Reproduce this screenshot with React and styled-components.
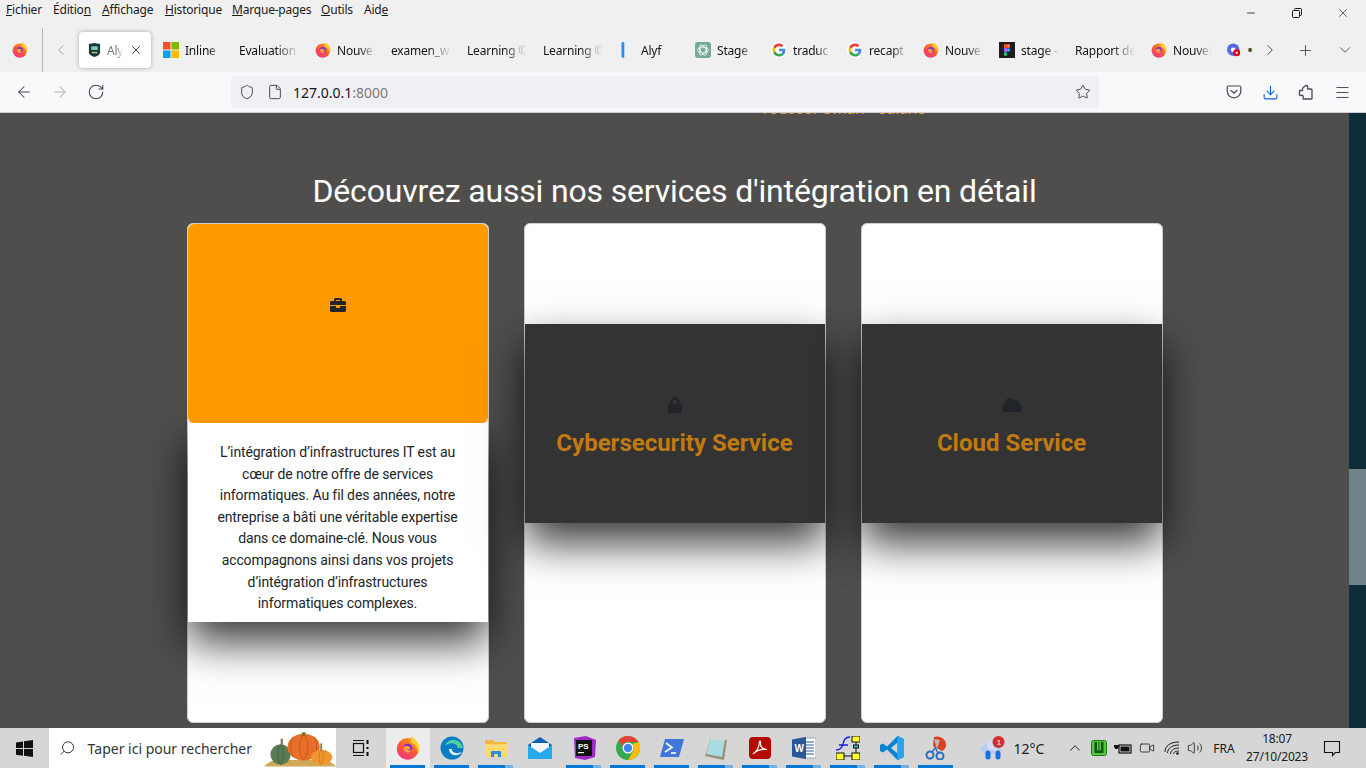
import React from 'react'
import styled, { createGlobalStyle } from 'styled-components'
import {
  ArrowLeft, ArrowRight, RotateCw, Shield, File, Star, Download, Menu,
  ChevronLeft, ChevronRight, ChevronDown, ChevronUp, Plus, X, Minus, Search, Volume2, Video,
} from 'lucide-react'
import { FaBriefcase, FaLock, FaCloud } from 'react-icons/fa'

const uiFont = '"Noto Sans", "Open Sans", sans-serif'
const pageFont = 'Roboto, "Noto Sans", sans-serif'

const GlobalStyle = createGlobalStyle`
  html, body { margin: 0; padding: 0; background: #4f4e4c; }
  body { font-family: ${uiFont}; overflow: hidden; }
  * { box-sizing: border-box; }
`

const Screen = styled.div`
  width: 1366px;
  height: 768px;
  display: flex;
  flex-direction: column;
  overflow: hidden;
`

/* browser chrome */
const TitleRow = styled.div`
  height: 28px;
  background: #f0f0f0;
  display: flex;
  justify-content: space-between;
`
const MenuBar = styled.div`
  display: flex;
  padding: 1px 0 0 6px;
  height: 20px;
`
const MenuItem = styled.span`
  width: ${p => p.$w}px;
  font-size: 12px;
  line-height: 18px;
  color: #1a1a1a;
  white-space: nowrap;
  letter-spacing: -0.2px;
`
const WinButtons = styled.div`
  display: flex;
  color: #111;
  padding-top: 5px;
`
const WinButton = styled.div`
  width: 46px;
  height: 16px;
  display: flex;
  align-items: center;
  justify-content: center;
`
const TabRow = styled.div`
  height: 44px;
  background: #f0f0f0;
  display: flex;
  align-items: center;
`
const AppSlot = styled.div`
  width: 43px;
  height: 44px;
  border-right: 1px solid #b8b8b8;
  display: flex;
  align-items: center;
  justify-content: center;
  padding-right: 3px;
  margin-right: 36px;
  position: relative;
`
const ScrollLeft = styled.div`
  position: absolute;
  left: 52px;
  top: 13px;
  color: #b4b4b8;
  display: flex;
`
const ActiveTab = styled.div`
  width: 72px;
  height: 36px;
  margin-right: 4px;
  background: #fff;
  border-radius: 4px;
  box-shadow: 0 0 4px rgba(0, 0, 0, 0.3);
  display: flex;
  align-items: center;
  padding-left: 9px;
  gap: 6px;
  font-size: 12px;
  color: #15141a;
`
const Tab = styled.div`
  width: 76px;
  height: 36px;
  flex: none;
  display: flex;
  align-items: center;
  gap: 6px;
  padding: 0 8px;
  font-size: 12px;
  color: #15141a;
  white-space: nowrap;
  overflow: hidden;
`
const TabTitle = styled.span`
  flex: 1;
  min-width: 0;
  overflow: hidden;
  letter-spacing: -0.2px;
  mask-image: linear-gradient(to right, #000 62%, transparent 100%);
`
const ActiveTitle = styled(TabTitle)`
  flex: none;
  width: 16px;
  color: #777;
`
const TabControl = styled.div`
  width: ${p => p.$w}px;
  height: 44px;
  flex: none;
  display: flex;
  align-items: center;
  justify-content: ${p => (p.$edge ? 'flex-start' : 'center')};
  padding-left: ${p => (p.$edge ? '8px' : '0')};
  gap: 6px;
  color: #4a4a4f;
`
const Toolbar = styled.div`
  height: 41px;
  background: #f9f9fb;
  border-bottom: 1px solid #cfcfd3;
  display: flex;
  align-items: center;
`
const ToolIcon = styled.div`
  width: 36px;
  display: flex;
  justify-content: center;
  color: ${p => p.$color || '#4a4a4f'};
`
const NavGroup = styled.div`
  display: flex;
  padding-left: 6px;
  width: 231px;
`
const UrlBar = styled.div`
  width: 868px;
  height: 32px;
  background: #f0f0f4;
  border-radius: 4px;
  display: flex;
  align-items: center;
  padding-left: 8px;
  color: #4a4a4f;
  gap: 12px;
`
const UrlText = styled.span`
  font-size: 14px;
  color: #15141a;
  flex: 1;
  margin-left: -2px;
`
const UrlPort = styled.span`
  color: #7a7a80;
`
const StarSlot = styled.div`
  display: flex;
  padding-right: 8px;
`
const RightTools = styled.div`
  display: flex;
  padding-left: 117px;
`

/* page */
const Viewport = styled.div`
  height: 615px;
  display: flex;
`
const Page = styled.main`
  flex: 1;
  background: #4f4e4c;
  overflow: hidden;
  font-family: ${pageFont};
`
const ClippedCaption = styled.div`
  height: 2px;
  overflow: hidden;
  display: flex;
  align-items: flex-end;
  padding-left: 760px;
  color: #f09a35;
  font-size: 16px;
  line-height: 12px;
  white-space: nowrap;
`
const Heading = styled.h2`
  margin: 52px 0 8px;
  font-size: 32px;
  line-height: 48px;
  font-weight: 400;
  letter-spacing: -0.17px;
  color: #fff;
  text-align: center;
`
const Cards = styled.div`
  display: flex;
  justify-content: center;
  gap: 35px;
`
const Card = styled.article`
  width: 302px;
  height: 500px;
  flex: none;
  background: #fff;
  border: 1px solid #cfcfcf;
  border-radius: 6px;
`
const Face = styled.div`
  position: relative;
  height: 199px;
  margin-top: ${p => p.$offset || 0}px;
  padding-top: 73px;
  display: flex;
  flex-direction: column;
  align-items: center;
  color: #212529;
  background: ${p => p.$bg};
  border-radius: ${p => (p.$round ? '6px' : '0')};
  box-shadow: ${p => (p.$shadow ? '0 20px 40px rgba(0, 0, 0, 0.78)' : 'none')};
`
const FaceIcon = styled.div`
  height: 16px;
  display: flex;
  align-items: center;
  font-size: ${p => p.$size || 16}px;
`
const CardTitle = styled.h3`
  margin: 12px 0 0;
  font-size: 24px;
  line-height: 36px;
  font-weight: 700;
  color: #c07a10;
  white-space: nowrap;
`
const CardText = styled.div`
  height: 199px;
  padding-top: 19px;
  font-size: 14px;
  line-height: 21.6px;
  letter-spacing: -0.1px;
  color: #212529;
  text-align: center;
  white-space: nowrap;
  background: #fff;
  box-shadow: 0 20px 40px rgba(0, 0, 0, 0.78);
`
const Scrollbar = styled.div`
  width: 17px;
  background: #0f2d38;
  padding-top: 356px;
`
const Thumb = styled.div`
  height: 116px;
  background: #6e8287;
`

/* windows taskbar */
const Taskbar = styled.footer`
  height: 40px;
  background: #d6d6d6;
  display: flex;
  align-items: center;
`
const StartSlot = styled.div`
  width: 49px;
  display: flex;
  justify-content: center;
`
const SearchBox = styled.div`
  width: 287px;
  height: 40px;
  background: #fff;
  display: flex;
  align-items: center;
  padding-left: 10px;
  gap: 12px;
  font-size: 14px;
  color: #333;
  overflow: hidden;
`
const SearchLabel = styled.span`
  flex: 1;
  white-space: nowrap;
`
const TaskCell = styled.div`
  width: ${p => p.$w || 44}px;
  height: 40px;
  flex: none;
  position: relative;
  display: flex;
  align-items: center;
  justify-content: center;
  background: ${p => (p.$active ? '#ececec' : 'transparent')};
  &::after {
    content: '';
    display: ${p => (p.$run ? 'block' : 'none')};
    position: absolute;
    left: 4px;
    right: 5px;
    bottom: 0;
    height: 3px;
    background: ${p =>
      p.$run === 'split'
        ? 'linear-gradient(to right, #0078d4 77%, #6fb1e4 77%)'
        : '#0078d4'};
  }
`
const TraySlot = styled.div`
  width: ${p => p.$w}px;
  margin-left: ${p => p.$ml || 0}px;
  flex: none;
  display: flex;
  align-items: center;
  justify-content: center;
  color: #1a1a1a;
  font-size: ${p => p.$fs || 12}px;
  white-space: nowrap;
`
const Clock = styled.div`
  width: 68px;
  flex: none;
  font-size: 12px;
  line-height: 18px;
  text-align: center;
  color: #1a1a1a;
  letter-spacing: -0.2px;
`

/* favicons and logos */
const FirefoxIcon = ({ size = 16 }) => (
  <svg width={size} height={size} viewBox="0 0 16 16">
    <defs>
      <linearGradient id="ffBody" x1="0.8" y1="0" x2="0.2" y2="1">
        <stop offset="0" stopColor="#ffa020" />
        <stop offset="0.5" stopColor="#ff5a30" />
        <stop offset="1" stopColor="#f0308a" />
      </linearGradient>
    </defs>
    <circle cx="7.8" cy="8.6" r="7.2" fill="url(#ffBody)" />
    <path d="M9.5.3c3.300 1.200 6 4 6 7.700 0 1.300-.3 2.500-.8 3.500-.3-3.800-2.200-6.300-5.400-7.300.9-1.200 1-2.700.2-3.900z" fill="#ffcf30" />
    <circle cx="7.800" cy="8.200" r="3.100" fill="#7a30c8" />
    <path d="M5 7.200c1.500-.9 4-.6 4.600.8.300 1-1.300 1.400-2.200 1 1.100 1.100 2.900.6 3.300-.7-.1 1.900-1.700 3.100-3.400 2.800-1.900-.3-2.800-2.300-2.300-3.900z" fill="#ff9a3a" />
  </svg>
)
const MicrosoftIcon = () => (
  <svg width="16" height="16" viewBox="0 0 16 16">
    <rect width="7.500" height="7.500" fill="#f25022" />
    <rect x="8.500" width="7.500" height="7.500" fill="#7fba00" />
    <rect y="8.500" width="7.500" height="7.500" fill="#00a4ef" />
    <rect x="8.500" y="8.500" width="7.500" height="7.500" fill="#ffb900" />
  </svg>
)
const GoogleIcon = () => (
  <svg width="16" height="16" viewBox="0 0 48 48">
    <circle cx="24" cy="24" r="24" fill="#fff" />
    <path fill="#EA4335" d="M24 12.500c3 0 5.600 1 7.700 3l5.700-5.700C33.900 6.500 29.400 4.500 24 4.500 16.400 4.500 9.800 8.900 6.600 15.200l6.700 5.200c1.600-4.700 6-7.900 10.700-7.900z" />
    <path fill="#4285F4" d="M43 24.500c0-1.400-.1-2.700-.4-4H24v7.600h10.700c-.5 2.500-1.900 4.600-4 6l6.500 5c3.700-3.500 5.800-8.600 5.800-14.600z" />
    <path fill="#FBBC05" d="M13.300 28.600c-.4-1.200-.7-2.400-.7-3.600 0-1.300.2-3.400.7-4.600l-6.700-5.200C5.200 18 4.500 21 4.500 24s.7 6 2.100 8.800l6.700-4.200z" />
    <path fill="#34A853" d="M24 43.500c5.300 0 9.700-1.700 12.900-4.800l-6.300-4.900c-1.700 1.200-3.900 1.900-6.600 1.900-4.900 0-9-3.200-10.500-7.700l-6.700 5.100C9.900 39.100 16.400 43.500 24 43.500z" />
  </svg>
)
const GptIcon = () => (
  <svg width="16" height="16" viewBox="0 0 16 16">
    <rect width="16" height="16" rx="3" fill="#74aa9c" />
    <g fill="none" stroke="#fff" strokeWidth="0.8">
      <ellipse cx="8" cy="8" rx="5.500" ry="2.800" />
      <ellipse cx="8" cy="8" rx="5.500" ry="2.800" transform="rotate(60 8 8)" />
      <ellipse cx="8" cy="8" rx="5.500" ry="2.800" transform="rotate(120 8 8)" />
    </g>
  </svg>
)
const FigmaIcon = () => (
  <svg width="16" height="16" viewBox="0 0 16 16">
    <rect width="16" height="16" fill="#1e1e1e" />
    <rect x="5" y="2" width="3" height="4" fill="#f24e1e" />
    <rect x="8" y="2" width="3" height="4" rx="1.500" fill="#ff7262" />
    <rect x="5" y="6" width="3" height="4" fill="#a259ff" />
    <circle cx="9.500" cy="8" r="1.700" fill="#1abcfe" />
    <rect x="5" y="10" width="3" height="4" rx="1.500" fill="#0acf83" />
  </svg>
)
const AlyfIcon = () => (
  <svg width="16" height="16" viewBox="0 0 16 16">
    <rect x="2.500" y="0" width="2.800" height="16" rx="1.400" fill="#2a8cf0" />
  </svg>
)
const AlyfBadge = () => (
  <svg width="13" height="16" viewBox="0 0 14 16">
    <path d="M1 1.500 7 .5l6 1v9.500c0 2-3 3.500-6 4.500-3-1-6-2.500-6-4.500z" fill="#173a3c" />
    <rect x="3.500" y="4" width="7" height="4" fill="#7ec4b8" />
    <rect x="4" y="10" width="6" height="1.500" fill="#d8c060" />
  </svg>
)
const DiscordDot = () => (
  <svg width="17" height="17" viewBox="0 0 18 18">
    <circle cx="8" cy="8" r="8" fill="#5468e8" />
    <circle cx="8" cy="8" r="3" fill="#fff" />
    <circle cx="12.500" cy="12" r="4.500" fill="#e00010" />
    <circle cx="12.500" cy="12" r="1.500" fill="#fff" />
  </svg>
)
const PocketIcon = () => (
  <svg width="16" height="16" viewBox="0 0 16 16" fill="none" stroke="#4a4a4f" strokeWidth="1.200">
    <path d="M2.500 2h11c.8 0 1.300.5 1.300 1.300V7c0 3.800-3 6.800-6.800 6.800S1.200 10.800 1.200 7V3.300C1.200 2.500 1.700 2 2.500 2z" />
    <path d="M5 6.500 8 9.300l3-2.800" strokeLinecap="round" />
  </svg>
)
const PuzzleIcon = () => (
  <svg width="16" height="16" viewBox="0 0 16 16" fill="none" stroke="#4a4a4f" strokeWidth="1.300" strokeLinejoin="round">
    <path d="M1.500 6.500h3V5.300C4.500 4.300 5 3.500 5.800 3c1-.6 1.700-1.500 2.600-1.500 1 0 1.600 1 1.300 2-.2.500-.2 1 .1 1.500h3.200c.6 0 1 .4 1 1v8.500c0 .3-.2.500-.5.500H5.200v-2.500c0-1-1-1.500-1.800-1.100-.8.400-1.900-.2-1.900-1.100z" />
  </svg>
)
const RestoreIcon = () => (
  <svg width="10" height="10" viewBox="0 0 10 10" fill="none" stroke="#111" strokeWidth="1">
    <rect x="0.500" y="2.500" width="7" height="7" rx="1" />
    <path d="M2.500 2.500V1.500a1 1 0 0 1 1-1h5a1 1 0 0 1 1 1v5a1 1 0 0 1-1 1h-1" />
  </svg>
)
const WindowsLogo = () => (
  <svg width="17" height="17" viewBox="0 0 17 17" fill="#111">
    <path d="M0 2.400 7 1.400v6.700H0zM8 1.300 17 0v8.100H8zM0 9h7v6.700l-7-1zM8 9h9v8l-9-1.300z" />
  </svg>
)
const Pumpkins = () => (
  <svg width="78" height="40" viewBox="0 0 78 40">
    <path d="M0 40c3-3 7-6 12-7h54c5 1 9 4 12 7z" fill="#d0a858" />
    <ellipse cx="18" cy="27" rx="11" ry="11" fill="#5a7a55" />
    <path d="M18 16c-4 5-4 17 0 22M18 16c4 5 4 17 0 22" stroke="#44613f" fill="none" />
    <rect x="18" y="10" width="2.500" height="7" fill="#8a7a58" />
    <ellipse cx="43" cy="19" rx="17.500" ry="14.500" fill="#e8702a" />
    <path d="M43 5c-6 6-6 22 0 28M43 5c6 6 6 22 0 28M32 8c-4 6-4 16 0 22M54 8c4 6 4 16 0 22" stroke="#c9551a" fill="none" />
    <rect x="41" y="3" width="4" height="4" fill="#70762f" />
    <ellipse cx="62.500" cy="30" rx="11.500" ry="8" fill="#f0962e" />
    <path d="M62 22c-3 4-3 12 0 16M62 22c3 4 3 12 0 16" stroke="#d0781c" fill="none" />
    <rect x="61" y="15" width="2" height="8" fill="#9a7a48" />
  </svg>
)
const TaskView = () => (
  <svg width="18" height="18" viewBox="0 0 18 18" fill="none" stroke="#111" strokeWidth="1.200">
    <path d="M1 1.500h11M1 16.500h11" />
    <rect x="1.500" y="4.500" width="10" height="9" />
    <path d="M15.500 1v4M15.500 8v2M15.500 13v4" strokeWidth="2" />
  </svg>
)
const EdgeIcon = () => (
  <svg width="24" height="24" viewBox="0 0 24 24">
    <circle cx="12" cy="12" r="11.500" fill="#0c7cc4" />
    <path d="M23 13c-.5-6-5-9-10-9-4 0-7 2.500-8 6 2-2 5-3 8-2.500 3 .5 5 2.500 4.500 4.500H23z" fill="#4fd2a0" />
    <path d="M9 13c0 4 4 7 8 6 2.500-.5 4-1.500 5-3-2 1-4.500 1.500-6 1-3-.5-4.500-2-4-4z" fill="#fff" opacity="0.9" />
  </svg>
)
const FilesIcon = () => (
  <svg width="22" height="20" viewBox="0 0 22 20">
    <path d="M0 2h8l2 2h12v15H0z" fill="#f0b840" />
    <rect y="6" width="22" height="13" fill="#ffd870" />
    <path d="M6 19v-5a1 1 0 0 1 1-1h8a1 1 0 0 1 1 1v5h-3v-3H9v3z" fill="#2a8ee0" />
  </svg>
)
const MailIcon = () => (
  <svg width="24" height="22" viewBox="0 0 24 22">
    <path d="M12 0 24 8v14H0V8z" fill="#0a64b4" />
    <path d="M3 6h18v9l-9 4-9-4z" fill="#fff" opacity="0.95" />
    <path d="M0 8l12 8 12-8v14H0z" fill="#28a8ea" />
  </svg>
)
const PsIcon = () => (
  <svg width="24" height="24" viewBox="0 0 24 24">
    <path d="M2 2 14 0l10 4-1 17-10 3-10-2z" fill="#a028c8" />
    <rect x="4" y="4" width="16" height="16" fill="#111" />
    <text x="6" y="13" fontSize="8" fontWeight="700" fontFamily="Liberation Sans, sans-serif" fill="#fff">PS</text>
    <rect x="6" y="16" width="6" height="1.200" fill="#fff" />
  </svg>
)
const ChromeIcon = () => (
  <svg width="24" height="24" viewBox="0 0 24 24">
    <circle cx="12" cy="12" r="12" fill="#34a853" />
    <path d="M12 0a12 12 0 0 1 10.400 6H12a6 6 0 0 0-5.600 3.800L2.400 4.500A12 12 0 0 1 12 0z" fill="#ea4335" />
    <path d="M22.400 6A12 12 0 0 1 12 24l5.200-9A6 6 0 0 0 16 8z" fill="#fbbc05" />
    <circle cx="12" cy="12" r="5.500" fill="#fff" />
    <circle cx="12" cy="12" r="4.200" fill="#4285f4" />
  </svg>
)
const PowerShellIcon = () => (
  <svg width="24" height="20" viewBox="0 0 24 20">
    <path d="M5 1h19l-5 18H0z" fill="#3f78d8" />
    <path d="M6 5l6 4.500L5 14" fill="none" stroke="#fff" strokeWidth="1.600" />
    <path d="M11 15h5" stroke="#fff" strokeWidth="1.600" />
  </svg>
)
const NotepadIcon = () => (
  <svg width="24" height="24" viewBox="0 0 24 24">
    <path d="M7 1 23 4l-3 20L1 20z" fill="#9a8f78" />
    <path d="M7 1 21 3l-3 18L2 18z" fill="#a8dce0" />
    <path d="M7 1 21 3l-.5 2L6 3z" fill="#d8d8d0" />
  </svg>
)
const AcrobatIcon = () => (
  <svg width="22" height="22" viewBox="0 0 22 22">
    <rect width="22" height="22" rx="4" fill="#b30b00" />
    <path d="M4 17c3-2 6-7 6.500-12 .2-1.500 1.200-1 1 .5-.5 4 2 7 6.500 7-4-.5-9 0-12 3" fill="none" stroke="#fff" strokeWidth="1.200" />
  </svg>
)
const WordIcon = () => (
  <svg width="24" height="22" viewBox="0 0 24 22">
    <rect x="9" y="1" width="15" height="20" fill="#fff" stroke="#9aa8c0" />
    <path d="M11 5h11M11 8h11M11 11h11M11 14h11M11 17h11" stroke="#2a5699" />
    <path d="M0 2.500 14 0v22L0 19.500z" fill="#2a5699" />
    <text x="2.500" y="15" fontSize="10" fontWeight="700" fontFamily="Liberation Sans, sans-serif" fill="#fff">W</text>
  </svg>
)
const YedIcon = () => (
  <svg width="24" height="24" viewBox="0 0 24 24">
    <rect x="16" y="0" width="8" height="6" fill="#ffff30" stroke="#111" />
    <rect x="0" y="17" width="8" height="7" fill="#ffff30" stroke="#111" />
    <rect x="16" y="17" width="8" height="7" fill="#ffff30" stroke="#111" />
    <path d="M20 6v11M8 20h8" stroke="#111" />
    <path d="M0 14c4 0 6-2 7-6s2-7 7-7M3 9h9" fill="none" stroke="#1a1af0" strokeWidth="1.300" />
    <rect x="17.500" y="9" width="5" height="3" fill="#2ac0c0" stroke="#111" />
  </svg>
)
const VsCodeIcon = () => (
  <svg width="24" height="24" viewBox="0 0 24 24">
    <path d="M17.500 0 24 3v18l-6.500 3L7 13.500 3 16.500 0 15v-6l3-1.500 4 3z" fill="#0a84d0" />
    <path d="M17.500 6.500 11 12l6.500 5.500z" fill="#d6d6d6" />
    <path d="M17.500 0 24 3v18l-6.500 3z" fill="#28a4ec" />
  </svg>
)
const SnipIcon = () => (
  <svg width="22" height="24" viewBox="0 0 22 24">
    <path d="M9 1c6-2 12 2 12 8 0 3-2 5-4 6L8 10z" fill="#d84020" />
    <path d="M9 3 15 4l-3 9z" fill="#b8b8b8" />
    <circle cx="5" cy="19" r="3.500" fill="none" stroke="#2a70c0" strokeWidth="2" />
    <circle cx="15" cy="20" r="3.500" fill="none" stroke="#2a70c0" strokeWidth="2" />
    <path d="M7 16 11 11M13 17 10 11" stroke="#2a70c0" strokeWidth="1.500" />
  </svg>
)
const WeatherIcon = () => (
  <svg width="24" height="24" viewBox="0 0 24 24">
    <ellipse cx="10" cy="13" rx="10" ry="5.500" fill="#b8cdf0" />
    <circle cx="12" cy="9" r="6" fill="#d0ddf5" />
    <path d="M7 17v4M17 17v4" stroke="#1a70e0" strokeWidth="5" strokeLinecap="round" />
    <circle cx="17.500" cy="6" r="6" fill="#d03030" />
    <text x="15.700" y="9" fontSize="8" fontFamily="Liberation Sans, sans-serif" fill="#fff">1</text>
  </svg>
)
const GreenApp = () => (
  <svg width="16" height="16" viewBox="0 0 16 16">
    <rect x="0.500" y="0.500" width="15" height="15" rx="2" fill="#5cc040" stroke="#108010" />
    <path d="M3.500 2v11h9V2h-2.500v8.500h-1.500V2h-1v8.500H6V2z" fill="#0c5a10" />
  </svg>
)
const BatteryPlug = () => (
  <svg width="18" height="14" viewBox="0 0 18 14" fill="#111">
    <rect x="5" y="4" width="12" height="8" fill="none" stroke="#111" strokeWidth="1.200" />
    <rect x="6.500" y="5.500" width="9" height="5" />
    <path d="M1 1v3M4 1v3M0 4h5v2l-1.500 2h-2L0 6z" />
  </svg>
)
const WifiIcon = () => (
  <svg width="16" height="16" viewBox="0 0 16 16" fill="none" stroke="#1a1a1a" strokeWidth="1">
    <path d="M1 12C1 6 6 2 15 2M3.500 13c0-4 3.500-8 11.500-8M6.500 14c0-3 2.500-6 8.500-6M9.500 14c0-1.500 1.500-3 5.500-3" />
    <circle cx="13.500" cy="13.500" r="1.300" fill="#1a1a1a" stroke="none" />
  </svg>
)
const NotifyIcon = () => (
  <svg width="18" height="18" viewBox="0 0 18 18" fill="none" stroke="#111" strokeWidth="1.100">
    <path d="M1.500 2.500h15v11h-4.200l-2.800 3v-3H1.500z" />
  </svg>
)

const menu = [
  [47, 'F', 'ichier'],
  [49, 'Éditio', 'n'],
  [63, 'A', 'ffichage'],
  [67, 'H', 'istorique'],
  [89, 'M', 'arque-pages'],
  [43, 'O', 'utils'],
  [40, 'Aid', 'e'],
]

const tabs = [
  { icon: <MicrosoftIcon />, title: 'Inline' },
  { title: 'Evaluation' },
  { icon: <FirefoxIcon />, title: 'Nouvel' },
  { title: 'examen_w' },
  { title: 'Learning ©' },
  { title: 'Learning ©' },
  { icon: <AlyfIcon />, title: 'Alyf' },
  { icon: <GptIcon />, title: 'Stage' },
  { icon: <GoogleIcon />, title: 'traduc' },
  { icon: <GoogleIcon />, title: 'recapt' },
  { icon: <FirefoxIcon />, title: 'Nouvel' },
  { icon: <FigmaIcon />, title: 'stage -' },
  { title: 'Rapport de' },
  { icon: <FirefoxIcon />, title: 'Nouvel' },
]

const taskApps = [
  { icon: <FirefoxIcon size={24} />, active: true, run: 'full' },
  { icon: <EdgeIcon />, run: 'full' },
  { icon: <FilesIcon />, run: 'split' },
  { icon: <MailIcon /> },
  { icon: <PsIcon />, run: 'split' },
  { icon: <ChromeIcon />, run: 'full' },
  { icon: <PowerShellIcon />, run: 'full' },
  { icon: <NotepadIcon />, run: 'split' },
  { icon: <AcrobatIcon />, run: 'split' },
  { icon: <WordIcon />, run: 'split' },
  { icon: <YedIcon />, run: 'split' },
  { icon: <VsCodeIcon />, run: 'split' },
  { icon: <SnipIcon />, run: 'full' },
]

const App = () => {
  return (
    <Screen>
      <GlobalStyle />
      <TitleRow>
        <MenuBar>
          {menu.map(([w, a, b]) => {
            const tailUnderlined = a === 'Éditio' || a === 'Aid'
            return (
              <MenuItem key={a} $w={w}>
                {tailUnderlined ? <>{a}<u>{b}</u></> : <><u>{a}</u>{b}</>}
              </MenuItem>
            )
          })}
        </MenuBar>
        <WinButtons>
          <WinButton><Minus size={12} strokeWidth={1.6} /></WinButton>
          <WinButton><RestoreIcon /></WinButton>
          <WinButton><X size={14} strokeWidth={1.1} /></WinButton>
        </WinButtons>
      </TitleRow>

      <TabRow>
        <AppSlot>
          <FirefoxIcon />
          <ScrollLeft><ChevronLeft size={18} strokeWidth={1.4} /></ScrollLeft>
        </AppSlot>
        <ActiveTab>
          <AlyfBadge />
          <ActiveTitle>Alyf</ActiveTitle>
          <X size={14} strokeWidth={1.4} />
        </ActiveTab>
        {tabs.map((t, i) => (
          <Tab key={i}>
            {t.icon}
            <TabTitle>{t.title}</TabTitle>
          </Tab>
        ))}
        <TabControl $w={34} $edge><DiscordDot />•</TabControl>
        <TabControl $w={34}><ChevronRight size={18} strokeWidth={1.3} /></TabControl>
        <TabControl $w={36}><Plus size={17} strokeWidth={1.3} /></TabControl>
        <TabControl $w={43}><ChevronDown size={18} strokeWidth={1.2} /></TabControl>
      </TabRow>

      <Toolbar>
        <NavGroup>
          <ToolIcon><ArrowLeft size={18} strokeWidth={1.4} /></ToolIcon>
          <ToolIcon $color="#b4b4b8"><ArrowRight size={18} strokeWidth={1.4} /></ToolIcon>
          <ToolIcon><RotateCw size={18} strokeWidth={1.5} /></ToolIcon>
        </NavGroup>
        <UrlBar>
          <Shield size={16} strokeWidth={1.5} />
          <File size={16} strokeWidth={1.5} />
          <UrlText>127.0.0.1<UrlPort>:8000</UrlPort></UrlText>
          <StarSlot><Star size={16} strokeWidth={1.5} /></StarSlot>
        </UrlBar>
        <RightTools>
          <ToolIcon><PocketIcon /></ToolIcon>
          <ToolIcon $color="#0a60d8"><Download size={17} strokeWidth={1.5} /></ToolIcon>
          <ToolIcon><PuzzleIcon /></ToolIcon>
          <ToolIcon><Menu size={17} strokeWidth={1.4} /></ToolIcon>
        </RightTools>
      </Toolbar>

      <Viewport>
        <Page>
          <ClippedCaption>Youssef Omari - Salarié</ClippedCaption>
          <Heading>Découvrez aussi nos services d'intégration en détail</Heading>
          <Cards>
            <Card>
              <Face $bg="#ff9900" $round><FaceIcon><FaBriefcase /></FaceIcon></Face>
              <CardText>
                L’intégration d’infrastructures IT est au<br />
                cœur de notre offre de services<br />
                informatiques. Au fil des années, notre<br />
                entreprise a bâti une véritable expertise<br />
                dans ce domaine-clé. Nous vous<br />
                accompagnons ainsi dans vos projets<br />
                d’intégration d’infrastructures<br />
                informatiques complexes.
              </CardText>
            </Card>
            <Card>
              <Face $bg="#333333" $offset={100} $shadow>
                <FaceIcon><FaLock /></FaceIcon>
                <CardTitle>Cybersecurity Service</CardTitle>
              </Face>
            </Card>
            <Card>
              <Face $bg="#333333" $offset={100} $shadow>
                <FaceIcon $size={20}><FaCloud /></FaceIcon>
                <CardTitle>Cloud Service</CardTitle>
              </Face>
            </Card>
          </Cards>
        </Page>
        <Scrollbar><Thumb /></Scrollbar>
      </Viewport>

      <Taskbar>
        <StartSlot><WindowsLogo /></StartSlot>
        <SearchBox>
          <Search size={18} strokeWidth={1.4} style={{ transform: 'scaleX(-1)' }} />
          <SearchLabel>Taper ici pour rechercher</SearchLabel>
          <Pumpkins />
        </SearchBox>
        <TaskCell $w={50}><TaskView /></TaskCell>
        {taskApps.map((a, i) => (
          <TaskCell key={i} $active={a.active} $run={a.run}>{a.icon}</TaskCell>
        ))}
        <TraySlot $w={24} $ml={23}><WeatherIcon /></TraySlot>
        <TraySlot $w={38} $fs={14} $ml={5}>12°C</TraySlot>
        <TraySlot $w={24} $ml={15}><ChevronUp size={18} strokeWidth={1.3} /></TraySlot>
        <TraySlot $w={24}><GreenApp /></TraySlot>
        <TraySlot $w={24}><BatteryPlug /></TraySlot>
        <TraySlot $w={24}><Video size={16} strokeWidth={1.2} /></TraySlot>
        <TraySlot $w={26}><WifiIcon /></TraySlot>
        <TraySlot $w={20}><Volume2 size={16} strokeWidth={1.2} /></TraySlot>
        <TraySlot $w={38}>FRA</TraySlot>
        <Clock>18:07<br />27/10/2023</Clock>
        <TraySlot $w={42}><NotifyIcon /></TraySlot>
      </Taskbar>
    </Screen>
  )
}

export default App
